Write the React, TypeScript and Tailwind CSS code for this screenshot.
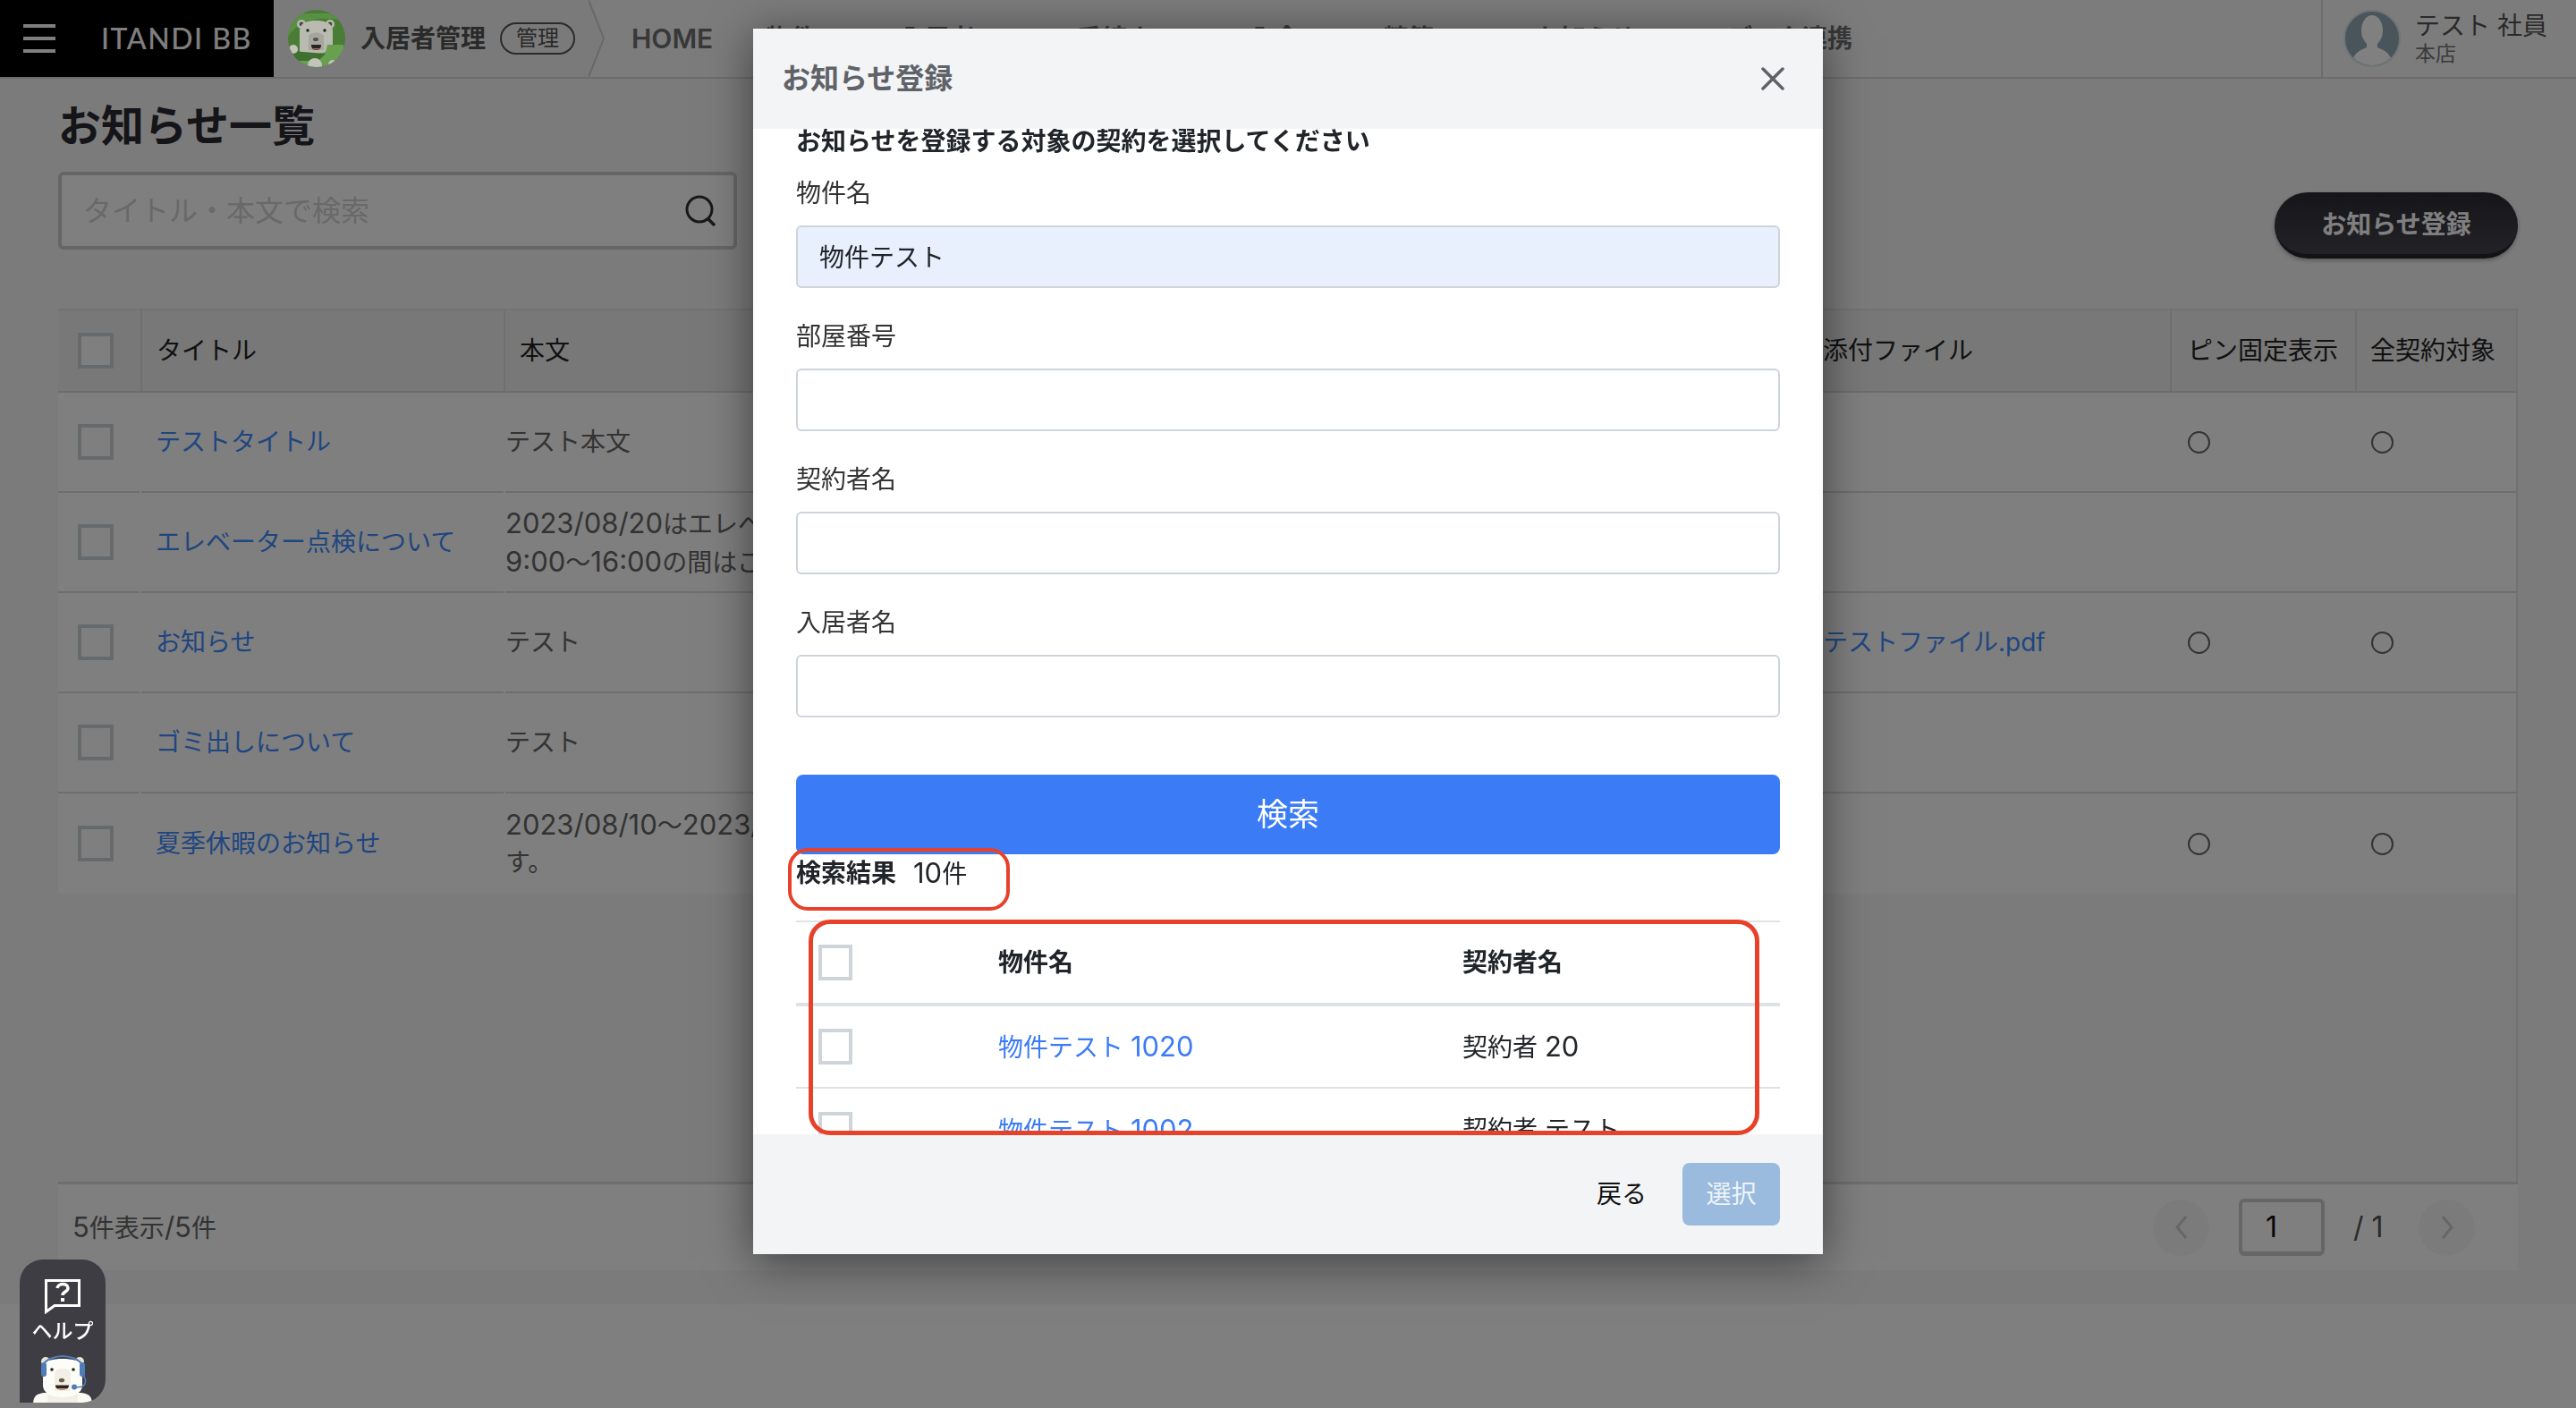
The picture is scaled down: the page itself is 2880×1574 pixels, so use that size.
import type { ReactNode } from "react";

const FONT = "[font-family:'Inter','Noto_Sans_CJK_JP',sans-serif]";

function Num({ children }: { children: ReactNode }) {
  return <span className="text-[31px]">{children}</span>;
}

function Check() {
  return <span className="block w-[40px] h-[40px] border-[4px] border-[#ced4da] bg-white shrink-0" />;
}

function Caret() {
  return (
    <svg width="24" height="24" viewBox="0 0 24 24" className="shrink-0">
      <path d="M2 2h20L12 16z" fill="#707070" />
    </svg>
  );
}

function ForestBear() {
  return (
    <svg width="64" height="64" viewBox="0 0 64 64" className="relative z-20 shrink-0">
      <clipPath id="fb"><circle cx="32" cy="32" r="32" /></clipPath>
      <g clipPath="url(#fb)">
        <rect width="64" height="64" fill="#4a7c35" />
        <path d="M0 30C12 12 30 6 64 12V4H0z" fill="#5a9044" />
        <circle cx="15" cy="16" r="5" fill="#b9bbb0" />
        <circle cx="47" cy="16" r="5" fill="#b9bbb0" />
        <circle cx="15" cy="16" r="2.4" fill="#4b4a44" />
        <circle cx="47" cy="16" r="2.4" fill="#4b4a44" />
        <path d="M13 24C13 14 22 12 31 12s19 2 19 12v28H13z" fill="#b9bbb0" />
        <path d="M23 30c0-6 17-6 17 0v15H23z" fill="#a5a69c" />
        <circle cx="22" cy="23" r="1.7" fill="#222" />
        <circle cx="41" cy="23" r="1.7" fill="#222" />
        <ellipse cx="31" cy="33" rx="3" ry="2" fill="#57534a" />
        <path d="M26 39h11c0 5-3 6-5.500 6S26 44 26 39z" fill="#2b2320" />
        <path d="M27 43h9c-1 2-7 2-9 0z" fill="#b5665a" />
        <path d="M0 48c16 6 30 2 42-1l2-8h18v25H0z" fill="#69a04f" />
        <path d="M4 46l38 3-8 8H8z" fill="#3f7030" />
        <circle cx="30" cy="62" r="8" fill="#c3c4ba" />
        <circle cx="6" cy="44" r="5" fill="#c3c4ba" />
        <circle cx="50" cy="61" r="5" fill="#c3c4ba" />
      </g>
    </svg>
  );
}

function Avatar() {
  return (
    <svg width="64" height="64" viewBox="0 0 64 64" className="relative z-20 shrink-0">
      <circle cx="32" cy="32" r="31" fill="#4a555b" stroke="#6f7476" strokeWidth="2" />
      <clipPath id="av"><circle cx="32" cy="32" r="30" /></clipPath>
      <g clipPath="url(#av)" fill="#808080">
        <ellipse cx="32" cy="23" rx="12" ry="17" />
        <path d="M26 36h12v6c8 3 16 7 18 22H8c2-15 10-19 18-22z" />
      </g>
    </svg>
  );
}

function HelpBear() {
  return (
    <svg width="66" height="55" viewBox="0 0 66 55" className="block">
      <path d="M0 55c0-8 3-12 12-13l42 0c9 1 12 5 12 13z" fill="#fbfbf4" />
      <path d="M16 44h34v11H16z" fill="#f2f0e6" />
      <circle cx="14" cy="7" r="5" fill="#e9e4d4" />
      <circle cx="52" cy="7" r="5" fill="#e9e4d4" />
      <path d="M11 14C11 6 23 4 33 4s22 2 22 10v20c0 8-10 13-22 13S11 42 11 34z" fill="#fdfdf7" />
      <path d="M24 20c0-7 18-7 18 0v20H24z" fill="#f2f0e6" />
      <circle cx="21" cy="16" r="1.800" fill="#222" />
      <circle cx="45" cy="16" r="1.800" fill="#222" />
      <ellipse cx="32" cy="28" rx="3.200" ry="2.300" fill="#6e5f4d" />
      <path d="M25 33.500h15c0 3.500-2 5-7.500 5S25 37 25 33.500z" fill="#2c2420" />
      <path d="M27 37h11c-1.500 2-9.500 2-11 0z" fill="#e09a83" />
      <path d="M10 16V12C14 4 26 1 33 1s19 3 23 11v4" fill="none" stroke="#4f7db8" strokeWidth="2" />
      <rect x="9" y="8" width="6" height="16" rx="3" fill="#4f7db8" />
      <rect x="52" y="8" width="6" height="16" rx="3" fill="#4f7db8" />
      <path d="M56 22c4 5 3 11-1 13l-7 1" fill="none" stroke="#4f7db8" strokeWidth="1.500" />
      <circle cx="46" cy="35.500" r="3" fill="#4f7db8" />
    </svg>
  );
}

const navItems = [
  { label: "物件", box: "w-[150px]", gap: "ml-[23px]" },
  { label: "入居者", box: "w-[198px]", gap: "ml-[38px]" },
  { label: "手続き", box: "w-[193px]", gap: "ml-[26px]" },
  { label: "入金", box: "w-[150px]", gap: "ml-[23px]" },
  { label: "精算", box: "w-[170px]", gap: "ml-[31px]" },
  { label: "お知らせ", box: "w-[214px]", gap: "ml-[23px]" },
];

const rows: { title: string; body: ReactNode[]; file?: string; pin: boolean }[] = [
  { title: "テストタイトル", body: ["テスト本文"], pin: true },
  {
    title: "エレベーター点検について",
    body: [
      <><Num>2023/08/20</Num>はエレベーター点検を実施します。</>,
      <><Num>9:00</Num>〜<Num>16:00</Num>の間はご利用いただけません。</>,
    ],
    pin: false,
  },
  { title: "お知らせ", body: ["テスト"], file: "テストファイル.pdf", pin: true },
  { title: "ゴミ出しについて", body: ["テスト"], pin: false },
  {
    title: "夏季休暇のお知らせ",
    body: [<><Num>2023/08/10</Num>〜<Num>2023/08/16</Num>は夏季休暇となりま</>, "す。"],
    pin: true,
  },
];

function Field({ label, value, filled }: { label: string; value?: string; filled?: boolean }) {
  return (
    <div className="mb-[33px]">
      <div className="h-[42px] leading-[42px] text-[28px] text-[#333333]">{label}</div>
      <div
        className={`mt-[15px] h-[70px] rounded-[6px] border-[2px] border-[#ced4da] pl-[24px] pt-[2px] flex items-center text-[28px] text-[#212529] ${
          filled ? "bg-[#e8f0fe]" : "bg-white"
        }`}
      >
        {value}
      </div>
    </div>
  );
}

function ResultRow({ name, num, person, last }: { name: string; num: string; person: ReactNode; last?: boolean }) {
  return (
    <div className={`h-[92px] flex items-center shrink-0 ${last ? "" : "border-b-[2px] border-[#dee2e6]"}`}>
      <div className="w-[226px] pl-[25px] shrink-0">
        <span className="block w-[38px] h-[40px] border-[4px] border-[#ced4da] bg-white" />
      </div>
      <div className="w-[519px] shrink-0 text-[28px] leading-[42px] text-[#3b7cf6]">
        {name} <Num>{num}</Num>
      </div>
      <div className="text-[28px] leading-[42px] text-[#212529]">{person}</div>
    </div>
  );
}

function Modal() {
  return (
    <div className="absolute z-30 left-[842px] top-[32px] w-[1196px] h-[1370px] flex flex-col bg-white shadow-[0_8px_48px_rgba(0,0,0,0.5)]">
      <div className="h-[112px] shrink-0 bg-[#f3f4f6] flex items-center justify-between pl-[32px] pr-[43px]">
        <span className="text-[32px] font-bold text-[#5f6368]">お知らせ登録</span>
        <svg width="26" height="26" viewBox="0 0 26 26">
          <path d="M2 2l22 22M24 2L2 24" stroke="#5f6368" strokeWidth="3.500" strokeLinecap="round" />
        </svg>
      </div>
      <div className="flex-1 min-h-0 overflow-hidden px-[48px]">
        <div className="-mt-[7px] h-[42px] leading-[42px] text-[28px] font-bold text-[#212529]">
          お知らせを登録する対象の契約を選択してください
        </div>
        <div className="mt-[16px]">
          <Field label="物件名" value="物件テスト" filled />
          <Field label="部屋番号" />
          <Field label="契約者名" />
          <Field label="入居者名" />
        </div>
        <div className="mt-[64px] h-[89px] rounded-[8px] bg-[#3b7cf6] flex items-center justify-center text-[35px] text-white">
          検索
        </div>
        <div className="h-[42px] flex items-center text-[28px] text-[#212529]">
          <span className="font-bold">検索結果</span>
          <span className="ml-[19px]"><Num>10</Num>件</span>
        </div>
        <div className="mt-[32px] border-t-[2px] border-[#dee2e6]">
          <div className="h-[94px] flex items-center border-b-[4px] border-[#dee2e6] font-bold text-[28px] text-[#212529]">
            <div className="w-[226px] pl-[25px] shrink-0">
              <span className="block w-[38px] h-[40px] border-[4px] border-[#ced4da] bg-white" />
            </div>
            <div className="w-[519px] shrink-0">物件名</div>
            <div>契約者名</div>
          </div>
          <ResultRow name="物件テスト" num="1020" person={<>契約者 <Num>20</Num></>} />
          <ResultRow name="物件テスト" num="1002" person="契約者 テスト" last />
        </div>
      </div>
      <div className="h-[134px] shrink-0 bg-[#f3f4f6] flex items-center justify-end pr-[48px]">
        <span className="text-[28px] text-[#111111]">戻る</span>
        <div className="ml-[40px] w-[109px] h-[70px] rounded-[8px] bg-[#9abbdd] flex items-center justify-center text-[28px] text-[#eef3f8]">
          選択
        </div>
      </div>
      <div className="absolute left-[39px] top-[916px] w-[248px] h-[70px] rounded-[22px] border-[4px] border-[#e8412a]" />
      <div className="absolute left-[62px] top-[996px] w-[1063px] h-[241px] rounded-[24px] border-[5px] border-[#e8412a]" />
    </div>
  );
}

export default function App() {
  return (
    <div className={`relative w-[2880px] h-[1574px] overflow-hidden bg-white ${FONT}`}>
      <div className="h-[1458px] bg-[#f6f6f6]">
        <header className="h-[88px] flex border-b-[2px] border-[#d8d8d8] bg-[#f8f8f8]">
          <div className="w-[306px] h-[86px] bg-black flex items-center shrink-0 pl-[26px]">
            <div className="flex flex-col gap-[10px]">
              <span className="block w-[36px] h-[4px] bg-white" />
              <span className="block w-[36px] h-[4px] bg-white" />
              <span className="block w-[36px] h-[4px] bg-white" />
            </div>
            <span className="ml-[51px] font-['Lato'] text-[32px] font-medium tracking-[1.5px] text-white whitespace-nowrap">
              ITANDI BB
            </span>
          </div>
          <div className="w-[352px] shrink-0 flex items-center pl-[16px] bg-[#f4f4f4]">
            <ForestBear />
            <span className="ml-[17px] text-[28px] font-bold text-[#555555] whitespace-nowrap">入居者管理</span>
            <span className="ml-[16px] w-[84px] h-[36px] rounded-full border-[2px] border-[#555555] flex items-center justify-center text-[24px] text-[#555555]">
              管理
            </span>
          </div>
          <svg width="18" height="86" viewBox="0 0 18 86" className="shrink-0">
            <path d="M0 0L17 43 0 86z" fill="#f4f4f4" />
            <path d="M0 0L17 43 0 86" fill="none" stroke="#d0d0d0" strokeWidth="2" />
          </svg>
          <nav className="flex-1 flex items-center pl-[30px] text-[28px] font-bold text-[#707070] whitespace-nowrap">
            <span className="w-[150px] shrink-0 text-[30px] font-semibold">HOME</span>
            {navItems.map((n) => (
              <span key={n.label} className={`${n.box} shrink-0 flex items-center`}>
                {n.label}
                <span className={n.gap}>
                  <Caret />
                </span>
              </span>
            ))}
            <span className="shrink-0">データ連携</span>
          </nav>
          <div className="w-[285px] shrink-0 border-l-[2px] border-[#d8d8d8] flex items-center pl-[23px]">
            <Avatar />
            <div className="ml-[16px] flex flex-col">
              <span className="text-[28px] leading-[34px] text-[#555555] whitespace-nowrap">テスト 社員</span>
              <span className="text-[23px] leading-[28px] text-[#777777]">本店</span>
            </div>
          </div>
        </header>

        <main className="px-[65px]">
          <h1 className="mt-[14px] pt-[3px] h-[72px] leading-[72px] text-[48px] font-bold text-[#2a2a33]">お知らせ一覧</h1>
          <div className="mt-[18px] flex justify-between items-start">
            <div className="w-[759px] h-[87px] rounded-[6px] border-[4px] border-[#cccccc] bg-white flex items-center justify-between pl-[24px] pr-[19px]">
              <span className="text-[32px] text-[#d2d2d2]">タイトル・本文で検索</span>
              <svg width="35" height="35" viewBox="0 0 35 35">
                <circle cx="16" cy="16" r="14" fill="none" stroke="#333338" strokeWidth="3" />
                <path d="M25 26l8 8" stroke="#333338" strokeWidth="3.500" />
              </svg>
            </div>
            <div className="mt-[23px] pt-[3px] w-[272px] h-[74px] rounded-full bg-gradient-to-b from-[#2a2a34] to-[#46464e] border-b-[5px] border-[#25252e] shadow-[0_2px_4px_rgba(0,0,0,0.3)] flex items-center justify-center text-[28px] font-bold text-white">
              お知らせ登録
            </div>
          </div>

          <div className="mt-[56px] h-[976px] border-t-[2px] border-r-[2px] border-[#e4e4e4]">
            <div className="h-[92px] flex items-stretch bg-[#f0f0f0] border-b-[2px] border-[#dadada] text-[28px] text-[#222222]">
              <div className="w-[92px] shrink-0 flex items-center pl-[22px]">
                <Check />
              </div>
              <div className="w-[406px] shrink-0 border-l-[2px] border-[#dfdfdf] flex items-center pl-[16px]">タイトル</div>
              <div className="w-[1457px] shrink-0 border-l-[2px] border-[#dfdfdf] flex items-center pl-[16px]">本文</div>
              <div className="w-[406px] shrink-0 flex items-center pl-[18px]">添付ファイル</div>
              <div className="w-[207px] shrink-0 border-l-[2px] border-[#dfdfdf] flex items-center pl-[18px] whitespace-nowrap">
                ピン固定表示
              </div>
              <div className="flex-1 border-l-[2px] border-[#dfdfdf] flex items-center pl-[15px] whitespace-nowrap">全契約対象</div>
            </div>
            {rows.map((r, i) => (
              <div key={r.title} className="h-[112px] flex items-stretch bg-white text-[28px]">
                <div className={`w-[91px] shrink-0 flex items-center pl-[22px] ${i < 4 ? "border-b-[2px] border-[#dcdcdc]" : ""}`}>
                  <Check />
                </div>
                <div className={`ml-[2px] w-[405px] shrink-0 flex items-center pl-[16px] text-[#3f8cff] ${i < 4 ? "border-b-[2px] border-[#dcdcdc]" : ""}`}>
                  {r.title}
                </div>
                <div className={`ml-[2px] w-[1455px] shrink-0 flex flex-col justify-center text-[#666666] leading-[43px] ${i < 4 ? "border-b-[2px] border-[#dcdcdc]" : ""}`}>
                  {r.body.map((l, j) => (
                    <div key={j} className="h-[43px] whitespace-nowrap">{l}</div>
                  ))}
                </div>
                <div className={`w-[406px] shrink-0 flex items-center pl-[18px] text-[#3f8cff] ${i < 4 ? "border-b-[2px] border-[#dcdcdc]" : ""}`}>
                  {r.file}
                </div>
                <div className={`w-[207px] shrink-0 flex items-center pl-[20px] ${i < 4 ? "border-b-[2px] border-[#dcdcdc]" : ""}`}>
                  {r.pin && <span className="block w-[25px] h-[25px] rounded-full border-[2px] border-[#666666]" />}
                </div>
                <div className={`flex-1 flex items-center pl-[18px] ${i < 4 ? "border-b-[2px] border-[#dcdcdc]" : ""}`}>
                  {r.pin && <span className="block w-[25px] h-[25px] rounded-full border-[2px] border-[#666666]" />}
                </div>
              </div>
            ))}
          </div>

          <div className="h-[99px] bg-white border-t-[3px] border-[#dcdcdc] flex items-center justify-between pl-[16px] pr-[48px] text-[28px] text-[#666666]">
            <span className="leading-[42px]"><Num>5</Num>件表示<Num>/5</Num>件</span>
            <div className="flex items-center">
              <span className="w-[63px] h-[63px] rounded-full bg-[#f7f7f7] flex items-center justify-center">
                <svg width="18" height="28" viewBox="0 0 18 28">
                  <path d="M14 2L4 14l10 12" fill="none" stroke="#cccccc" strokeWidth="3" />
                </svg>
              </span>
              <span className="ml-[33px] w-[96px] h-[64px] rounded-[6px] border-[4px] border-b-[5px] border-[#cccccc] flex items-center pl-[26px] text-[32px] text-[#111111]">
                1
              </span>
              <span className="ml-[32px] w-[34px] text-[32px] whitespace-nowrap text-[#555555]">/ 1</span>
              <span className="ml-[39px] w-[63px] h-[63px] rounded-full bg-[#f7f7f7] flex items-center justify-center">
                <svg width="18" height="28" viewBox="0 0 18 28">
                  <path d="M4 2l10 12L4 26" fill="none" stroke="#cccccc" strokeWidth="3" />
                </svg>
              </span>
            </div>
          </div>
        </main>
      </div>

      <div className="fixed inset-0 z-10 bg-black/50" />

      <div className="absolute z-20 left-[22px] top-[1408px] w-[96px] h-[160px] rounded-t-[26px] rounded-br-[26px] overflow-hidden bg-[#3f3d44] flex flex-col items-center">
        <svg width="40" height="39" viewBox="0 0 40 39" className="mt-[22px] shrink-0">
          <path d="M1.500 1.500h37v28H11l-9.500 7z" fill="none" stroke="#ffffff" strokeWidth="3" />
          <path d="M14 10c1-6 12-6 12 0 0 4-6 4-6 8" fill="none" stroke="#ffffff" strokeWidth="3.500" />
          <rect x="18" y="21" width="4" height="4" fill="#ffffff" />
        </svg>
        <span className="mt-[4px] text-[23px] leading-[30px] font-medium text-white whitespace-nowrap">ヘルプ</span>
        <span className="mt-[12px] shrink-0"><HelpBear /></span>
      </div>

      <Modal />
    </div>
  );
}
